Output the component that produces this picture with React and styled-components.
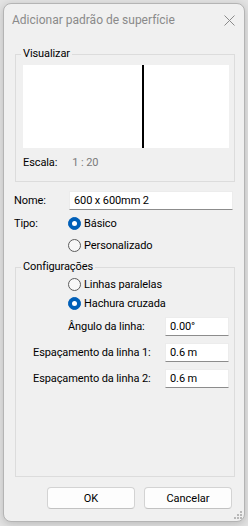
import React from "react";
import styled, { createGlobalStyle } from "styled-components";

const GlobalStyle = createGlobalStyle`
  html, body {
    margin: 0;
    padding: 0;
    background: #e3e3e3;
  }
  body {
    font-family: Roboto, "Noto Sans", sans-serif;
    font-size: 11px;
    letter-spacing: -0.1px;
    color: #000;
    white-space: nowrap;
  }
  * { box-sizing: border-box; }
`;

const Page = styled.div`
  width: 248px;
  height: 526px;
  padding: 3px;
`;

const Dialog = styled.div`
  position: relative;
  width: 242px;
  height: 519px;
  display: flex;
  flex-direction: column;
  background: #f0f0f0;
  border: 1px solid #b4b4b4;
  border-radius: 8px;
  box-shadow: 0 2px 8px rgba(0, 0, 0, 0.18);
  overflow: hidden;
`;

const TitleBar = styled.div`
  height: 34px;
  display: flex;
  align-items: center;
  justify-content: space-between;
  padding: 0 9px 2px 8px;
  color: #8a8a8a;
  font-size: 12px;
  letter-spacing: 0;
`;

const Body = styled.div`
  display: flex;
  flex-direction: column;
  padding: 9px 11px 12px 10px;
  flex: 1;
`;

const Group = styled.fieldset`
  margin: ${(p) => p.mt || 0}px 0 0 1px;
  width: 220px;
  border: 1px solid #dcdcdc;
  padding: ${(p) => p.pad};
  min-width: 0;
  display: flex;
  flex-direction: column;
  height: ${(p) => p.h || "auto"};

  legend {
    padding: 0 2px;
    margin-left: ${(p) => p.lm}px;
    line-height: 14px;
    height: 14px;
    color: #000;
  }
`;

const Preview = styled.div`
  width: 206px;
  height: 83px;
  background: #fff;
  display: flex;
  padding-left: 119px;
`;

const VLine = styled.div`
  width: 2px;
  height: 100%;
  background: #000;
`;

const ScaleRow = styled.div`
  margin-top: 8px;
  display: flex;
  line-height: 14px;
  height: 14px;

  span:last-child {
    margin-left: 15px;
    color: #7a7a7a;
  }
`;

const FieldRow = styled.div`
  display: flex;
  align-items: center;
  margin-top: ${(p) => p.mt || 0}px;
  padding-left: ${(p) => p.indent || 0}px;
  height: ${(p) => p.h || 19}px;
`;

const Label = styled.span`
  width: ${(p) => p.w}px;
  flex-shrink: 0;
`;

const TextBox = styled.div`
  width: ${(p) => p.w}px;
  height: 19px;
  background: #fff;
  border: 1px solid #ececec;
  border-bottom: 1px solid #8c8c8c;
  padding-left: 4px;
  display: flex;
  align-items: center;
`;

const RadioCircle = styled.span`
  width: 13px;
  height: 13px;
  border-radius: 50%;
  flex-shrink: 0;
  margin-right: 3px;
  display: flex;
  align-items: center;
  justify-content: center;
  background: ${(p) => (p.on ? "#005fb8" : "#f7f7f7")};
  border: 1px solid ${(p) => (p.on ? "#005fb8" : "#5c5c5c")};

  &::after {
    content: "";
    display: ${(p) => (p.on ? "block" : "none")};
    width: 5px;
    height: 5px;
    border-radius: 50%;
    background: #fff;
  }
`;

const RadioList = styled.div`
  display: flex;
  flex-direction: column;
  gap: ${(p) => p.gap || 0}px;
  margin-top: ${(p) => p.mt || 0}px;
  padding-left: ${(p) => p.indent || 0}px;
`;

const Footer = styled.div`
  display: flex;
  justify-content: flex-end;
  gap: 9px;
  margin-top: 10px;
  padding-right: 1px;
`;

const Button = styled.button`
  width: 88px;
  height: 22px;
  font: inherit;
  color: #000;
  background: #fdfdfd;
  border: 1px solid #d3d3d3;
  border-bottom-color: #c2c2c2;
  border-radius: 4px;
  padding: 0;
`;

const Grip = styled.svg`
  position: absolute;
  right: 2px;
  bottom: 2px;
`;

const Radio = ({ on, children }) => (
  <FieldRow h={19}>
    <RadioCircle on={on} />
    <span>{children}</span>
  </FieldRow>
);

const CloseIcon = () => (
  <svg width="11" height="11" viewBox="0 0 11 11">
    <path d="M0.5 0.5 L10.5 10.5 M10.5 0.5 L0.5 10.5" stroke="#8a8a8a" strokeWidth="1" />
  </svg>
);

export default function App() {
  return (
    <>
      <GlobalStyle />
      <Page>
        <Dialog>
          <TitleBar>
            <span>Adicionar padrão de superfície</span>
            <CloseIcon />
          </TitleBar>
          <Body>
            <Group pad="4px 4px 11px 7px" lm={-2}>
              <legend>Visualizar</legend>
              <Preview>
                <VLine />
              </Preview>
              <ScaleRow>
                <span>Escala:</span>
                <span>1 : 20</span>
              </ScaleRow>
            </Group>

            <FieldRow mt={9}>
              <Label w={55}>Nome:</Label>
              <TextBox w={165}>600 x 600mm 2</TextBox>
            </FieldRow>

            <RadioList gap={3} mt={4}>
              <FieldRow h={19}>
                <Label w={54}>Tipo:</Label>
                <RadioCircle on />
                <span>Básico</span>
              </FieldRow>
              <FieldRow h={19} indent={54}>
                <RadioCircle />
                <span>Personalizado</span>
              </FieldRow>
            </RadioList>

            <Group pad="1px 5px 0 0" h="217px" mt={5} lm={5}>
              <legend>Configurações</legend>
              <RadioList indent={52}>
                <Radio>Linhas paralelas</Radio>
                <Radio on>Hachura cruzada</Radio>
              </RadioList>
              <FieldRow mt={4} indent={52}>
                <Label w={97}>Ângulo da linha:</Label>
                <TextBox w={64}>0.00°</TextBox>
              </FieldRow>
              <FieldRow mt={7} indent={17}>
                <Label w={132}>Espaçamento da linha 1:</Label>
                <TextBox w={64}>0.6 m</TextBox>
              </FieldRow>
              <FieldRow mt={7} indent={17}>
                <Label w={132}>Espaçamento da linha 2:</Label>
                <TextBox w={64}>0.6 m</TextBox>
              </FieldRow>
            </Group>

            <Footer>
              <Button>OK</Button>
              <Button>Cancelar</Button>
            </Footer>
          </Body>
          <Grip width="8" height="8" viewBox="0 0 8 8">
            <g fill="#b8b8b8">
              <rect x="6" y="0" width="2" height="2" />
              <rect x="3" y="3" width="2" height="2" />
              <rect x="6" y="3" width="2" height="2" />
              <rect x="0" y="6" width="2" height="2" />
              <rect x="3" y="6" width="2" height="2" />
              <rect x="6" y="6" width="2" height="2" />
            </g>
          </Grip>
        </Dialog>
      </Page>
    </>
  );
}
